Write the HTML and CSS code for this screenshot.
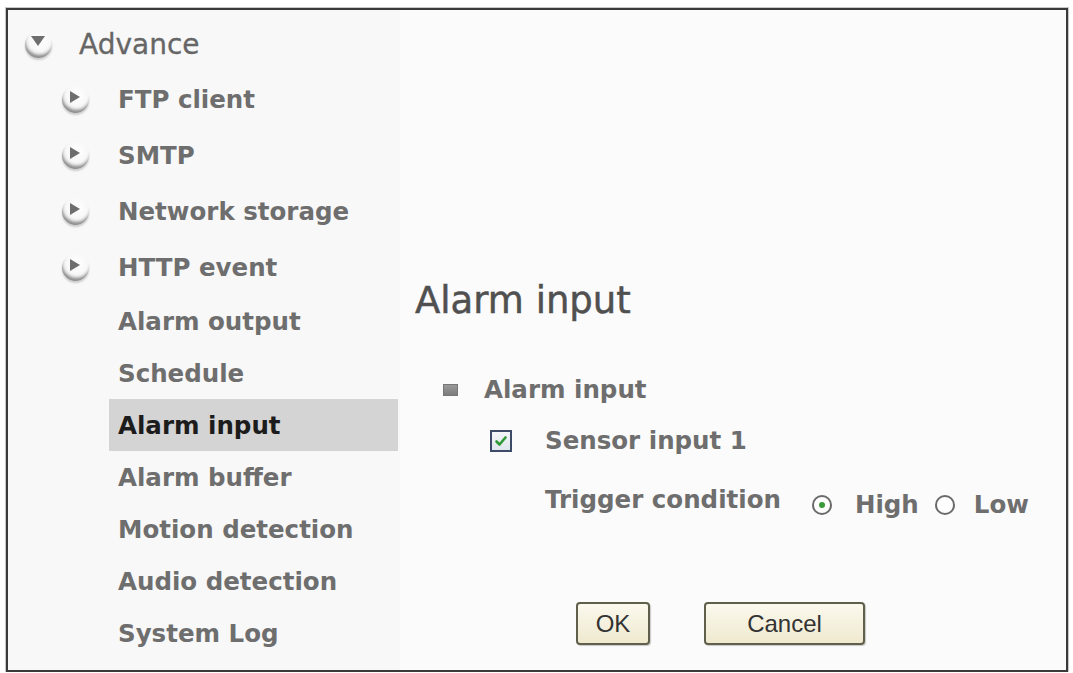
FILE: index.html
```html
<!DOCTYPE html>
<html>
<head>
<meta charset="utf-8">
<link rel="stylesheet" href="styles.css">
</head>
<body>
<div class="frame">
  <nav class="sidebar">
    <div class="row top"><span class="orb down"></span><span class="top-label">Advance</span></div>
    <div class="row sub"><span class="orb right"></span><span>FTP client</span></div>
    <div class="row sub"><span class="orb right"></span><span>SMTP</span></div>
    <div class="row sub"><span class="orb right"></span><span>Network storage</span></div>
    <div class="row sub"><span class="orb right"></span><span>HTTP event</span></div>
    <div class="row plain">Alarm output</div>
    <div class="row plain">Schedule</div>
    <div class="row plain active">Alarm input</div>
    <div class="row plain">Alarm buffer</div>
    <div class="row plain">Motion detection</div>
    <div class="row plain">Audio detection</div>
    <div class="row plain">System Log</div>
  </nav>
  <main class="content">
    <h1 class="title">Alarm input</h1>
    <div class="section"><span class="bullet"></span><span>Alarm input</span></div>
    <div class="field sensor">
      <span class="check"><svg width="14" height="14" viewBox="0 0 14 14"><path d="M2.5 7.5 L5.5 10.5 L11.5 3.5" fill="none" stroke="#2e9a34" stroke-width="2.6" stroke-linecap="round" stroke-linejoin="round"/></svg></span>
      <span>Sensor input 1</span>
    </div>
    <div class="field trigger">
      <span class="label">Trigger condition</span>
      <span class="opt"><span class="radio on"></span>High</span>
      <span class="opt low"><span class="radio"></span>Low</span>
    </div>
    <div class="actions">
      <button class="btn ok">OK</button>
      <button class="btn cancel">Cancel</button>
    </div>
  </main>
</div>
</body>
</html>
```
FILE: styles.css
```css
html, body {
  margin: 0;
  padding: 0;
  background: #ffffff;
}
body {
  font-family: "DejaVu Sans", Verdana, sans-serif;
}
.frame {
  box-sizing: border-box;
  margin: 8px 5px 0 6px;
  height: 664px;
  border: 2px solid #3a3a3a;
  outline: 1px solid #c8c8c8;
  display: flex;
  background: #fbfbfb;
}
.sidebar {
  width: 392px;
  flex: none;
  padding-top: 7px;
  background: #f8f8f8;
  color: #6e6e6e;
  font-weight: bold;
  font-size: 24.5px;
}
.row {
  display: flex;
  align-items: center;
}
.row.top {
  height: 54px;
  padding-left: 17px;
}
.top-label {
  font-weight: normal;
  font-size: 28px;
  margin-left: 27px;
  color: #666;
  -webkit-text-stroke: 0.3px #666;
}
.row.sub {
  height: 56px;
  padding-left: 54px;
}
.row.sub .orb {
  margin-right: 29px;
}
.row.plain {
  height: 52px;
  margin-left: 101px;
  padding-left: 9px;
}
.row.active {
  background: #d4d4d4;
  color: #1c1c1c;
  width: 280px;
}
.orb {
  position: relative;
  width: 27px;
  height: 27px;
  flex: none;
  border-radius: 50%;
  background: radial-gradient(circle at 55% 35%, #ffffff 0, #f8f8f8 45%, #e2e2e2 70%, #c4c4c4 100%);
  box-shadow: inset 1px -4px 3px -1px #8e8e8e, 0 2px 2px rgba(0,0,0,0.18);
}
.orb.right::after {
  content: "";
  position: absolute;
  left: 8px;
  top: 5px;
  border-left: 10px solid #6e6e6e;
  border-top: 6.5px solid transparent;
  border-bottom: 6.5px solid transparent;
}
.orb.down::after {
  content: "";
  position: absolute;
  left: 6px;
  top: 5px;
  border-top: 10px solid #6e6e6e;
  border-left: 7.5px solid transparent;
  border-right: 7.5px solid transparent;
}
.content {
  flex: 1;
  padding: 271px 0 0 15px;
  color: #6e6e6e;
  font-weight: bold;
  font-size: 24.5px;
}
.title {
  margin: 0;
  font-size: 37px;
  line-height: 40px;
  font-weight: normal;
  color: #505050;
  -webkit-text-stroke: 0.5px #505050;
}
.section, .field {
  display: flex;
  align-items: center;
  height: 30px;
  line-height: 30px;
}
.section {
  margin-top: 54px;
  padding-left: 28px;
}
.bullet {
  width: 15px;
  height: 12px;
  margin-right: 26px;
  background: linear-gradient(#9a9a9a, #7c7c7c);
  border: 1px solid #777;
  box-sizing: border-box;
}
.sensor {
  margin-top: 21px;
  padding-left: 75px;
}
.check {
  box-sizing: border-box;
  width: 22px;
  height: 22px;
  margin-right: 33px;
  border: 2px solid #3d4a68;
  background: linear-gradient(#f4f6f8, #dfe6ee);
  display: flex;
  align-items: center;
  justify-content: center;
}
.trigger {
  margin-top: 32px;
  padding-left: 130px;
}
.label {
  margin-right: 31px;
  position: relative;
  top: -3px;
}
.opt {
  display: flex;
  align-items: center;
  position: relative;
  top: 2px;
}
.opt.low {
  margin-left: 16px;
}
.radio {
  box-sizing: border-box;
  width: 20px;
  height: 20px;
  border-radius: 50%;
  border: 2px solid #6a6a6a;
  background: #fff;
  margin-right: 23px;
  display: flex;
  align-items: center;
  justify-content: center;
}
.opt.low .radio {
  margin-right: 19px;
}
.radio.on::after {
  content: "";
  width: 6px;
  height: 6px;
  border-radius: 50%;
  background: #3a9a3a;
}
.actions {
  margin-top: 84px;
  padding-left: 161px;
  display: flex;
  gap: 54px;
}
.btn {
  box-sizing: border-box;
  height: 43px;
  border: 2px solid #5f5f4c;
  border-radius: 4px;
  background: linear-gradient(#fbf9ee, #efe9cf);
  font-family: "Liberation Sans", Arial, sans-serif;
  font-size: 24px;
  color: #333;
  padding: 0;
  box-shadow: 1px 1px 1px rgba(0,0,0,0.2);
}
.btn.ok {
  width: 74px;
}
.btn.cancel {
  width: 161px;
}
```
